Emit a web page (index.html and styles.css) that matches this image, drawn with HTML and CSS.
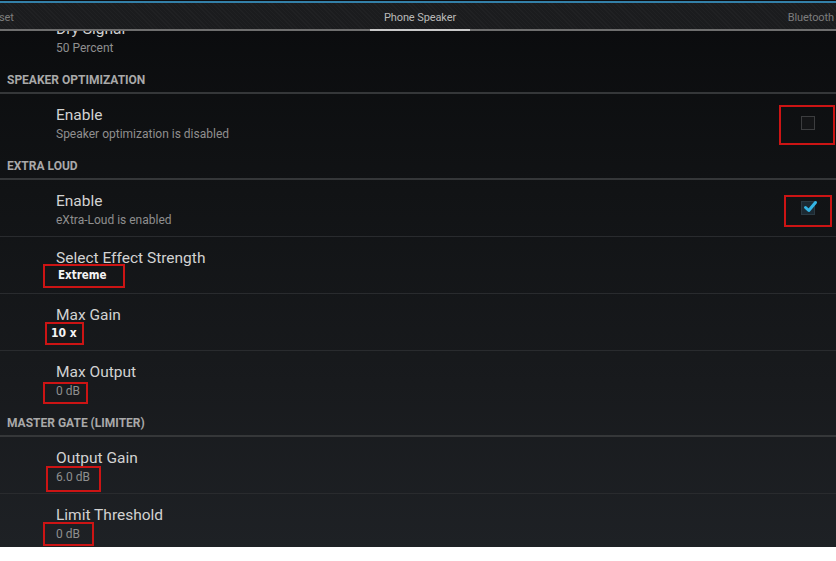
FILE: index.html
```html
<!DOCTYPE html>
<html>
<head>
<meta charset="utf-8">
<link rel="stylesheet" href="styles.css">
</head>
<body>
<div class="screen">
  <div class="tabbar">
    <div class="tabs">
      <span class="tab tab-left">set</span>
      <span class="tab tab-active">Phone Speaker</span>
      <span class="tab tab-right">Bluetooth</span>
    </div>
  </div>
  <div class="viewport">
    <div class="list">
      <div class="row last">
        <div class="text">
          <div class="title">Dry Signal</div>
          <div class="sub">50 Percent</div>
        </div>
      </div>
      <div class="header">SPEAKER OPTIMIZATION</div>
      <div class="row last">
        <div class="text">
          <div class="title">Enable</div>
          <div class="sub">Speaker optimization is disabled</div>
        </div>
        <span class="check"></span>
        <span class="mark mark-cb1"></span>
      </div>
      <div class="header">EXTRA LOUD</div>
      <div class="row">
        <div class="text">
          <div class="title">Enable</div>
          <div class="sub">eXtra-Loud is enabled</div>
        </div>
        <span class="check checked">
          <svg viewBox="0 0 16 16" width="16" height="16"><path d="M3.5 8.5 L6.8 11.5 L13.5 3.5" fill="none" stroke="#33b5e5" stroke-width="3" stroke-linecap="round" stroke-linejoin="round"/></svg>
        </span>
        <span class="mark mark-cb2"></span>
      </div>
      <div class="row">
        <div class="text">
          <div class="title">Select Effect Strength</div>
          <div class="sub val">Extreme</div>
        </div>
        <span class="mark mark-extreme"></span>
      </div>
      <div class="row">
        <div class="text">
          <div class="title">Max Gain</div>
          <div class="sub val val-gain">10 x</div>
        </div>
        <span class="mark mark-gain"></span>
      </div>
      <div class="row last">
        <div class="text">
          <div class="title">Max Output</div>
          <div class="sub">0 dB</div>
        </div>
        <span class="mark mark-output"></span>
      </div>
      <div class="header">MASTER GATE (LIMITER)</div>
      <div class="row">
        <div class="text">
          <div class="title">Output Gain</div>
          <div class="sub">6.0 dB</div>
        </div>
        <span class="mark mark-ogain"></span>
      </div>
      <div class="row">
        <div class="text">
          <div class="title">Limit Threshold</div>
          <div class="sub">0 dB</div>
        </div>
        <span class="mark mark-limit"></span>
      </div>
    </div>
  </div>
</div>
</body>
</html>
```

FILE: styles.css
```css
html, body {
  margin: 0;
  padding: 0;
  background: #ffffff;
}

.screen {
  width: 836px;
  height: 547px;
  display: flex;
  flex-direction: column;
  overflow: hidden;
  background: linear-gradient(to bottom, #0a0b0d 0%, #111315 35%, #181a1d 70%, #1e2125 100%);
  font-family: Roboto, "Noto Sans", sans-serif;
}

.tabbar {
  flex: 0 0 auto;
  height: 26px;
  border-top: 1px solid #0d0e10;
  box-shadow: inset 0 2px 0 #3380a8;
  padding-top: 2px;
  background:
    repeating-linear-gradient(45deg, rgba(255,255,255,0.025) 0 1px, transparent 1px 3px),
    #1b1c1e;
  border-bottom: 2px solid #6e6e6e;
  position: relative;
  z-index: 2;
}

.tabs {
  position: relative;
  height: 26px;
  font-size: 11px;
  color: #7d7d7d;
}

.tab {
  position: absolute;
  top: 8px;
  line-height: 14px;
  letter-spacing: -0.1px;
}

.tab-left { left: -1px; }
.tab-right { right: 2px; }

.tab-active {
  left: 370px;
  width: 100px;
  text-align: center;
  color: #b9b9b9;
  height: 18px;
  border-bottom: 2px solid #c9c9c9;
}

.viewport {
  flex: 1 1 auto;
  overflow: hidden;
}

.list {
  margin-top: -23px;
}

.row {
  position: relative;
  height: 56px;
  display: flex;
  align-items: center;
  border-bottom: 1px solid #292b2e;
}

.row.last {
  border-bottom: 0;
  height: 60px;
  align-items: flex-start;
}

.text {
  flex: 1 1 auto;
  padding-left: 56px;
  align-self: flex-start;
  padding-top: 11px;
}

.title {
  font-size: 15.5px;
  line-height: 20px;
  color: #d2d2d2;
}

.sub {
  font-size: 12px;
  line-height: 16px;
  margin-top: 1px;
  color: #8f8f8f;
}

.sub.val {
  font-family: "DejaVu Sans Condensed", "DejaVu Sans", sans-serif;
  font-weight: bold;
  color: #f4f4f4;
  font-size: 11.5px;
  margin-top: -2px;
  line-height: 18px;
  padding-left: 2px;
}

.sub.val-gain {
  margin-left: -5px;
  padding-left: 0;
  margin-top: -1px;
  font-size: 12px;
}

.header {
  height: 24px;
  padding: 0 7px;
  line-height: 24px;
  font-size: 12px;
  font-weight: bold;
  color: #a9a9a9;
  border-bottom: 2px solid #353739;
}

.check {
  flex: 0 0 auto;
  width: 12px;
  height: 12px;
  margin-right: 21px;
  border: 1px solid #3c3d3f;
  background: #141517;
  position: relative;
}

.row.last .check {
  margin-top: 22px;
}

.check.checked {
  background: #1c2a33;
  border-color: #2a3942;
}

.check svg {
  position: absolute;
  left: 0;
  top: -3px;
}

.mark {
  position: absolute;
  border: 2px solid #cc1414;
  box-sizing: border-box;
}

.mark-cb1 { right: 1px; top: 11px; width: 56px; height: 40px; }
.mark-cb2 { right: 4px; top: 15px; width: 48px; height: 32px; }
.mark-extreme { left: 43px; top: 27px; width: 82px; height: 24px; }
.mark-gain { left: 45px; top: 28px; width: 39px; height: 23px; }
.mark-output { left: 43px; top: 31px; width: 45px; height: 22px; }
.mark-ogain { left: 46px; top: 29px; width: 55px; height: 26px; }
.mark-limit { left: 43px; top: 28px; width: 51px; height: 24px; }
```
